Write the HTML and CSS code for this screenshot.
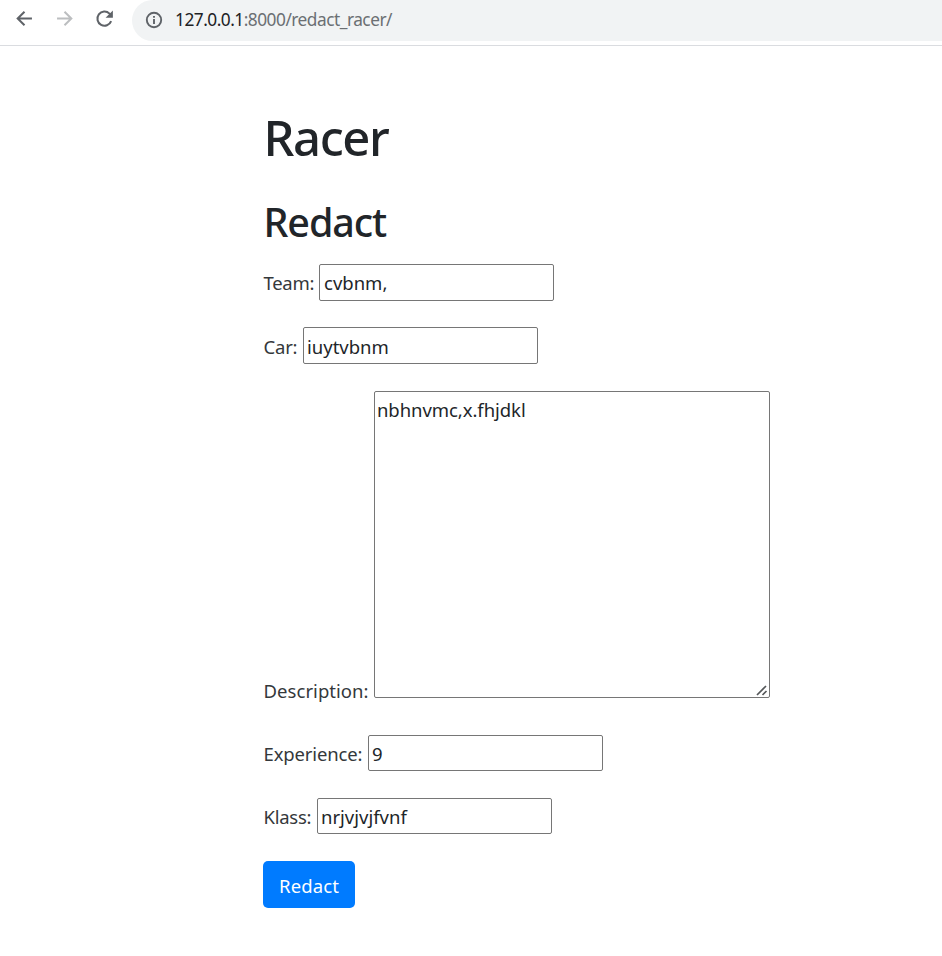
FILE: index.html
```
<!DOCTYPE html>
<html lang="en">
<head>
<meta charset="utf-8">
<title>Racer</title>
<link rel="stylesheet" href="styles.css">
</head>
<body>
<header class="toolbar">
  <svg class="nav" viewBox="0 0 24 24"><path d="M20.5 12H4.5M12 4.2 4.2 12l7.8 7.8"/></svg>
  <svg class="nav disabled" viewBox="0 0 24 24"><path d="M3.5 12h16M12 4.2l7.8 7.8-7.8 7.8"/></svg>
  <svg class="nav" viewBox="0 0 24 24"><path d="M19.6 15A8.1 8.1 0 1 1 17.7 6.4L20 8.7"/><path class="solid" d="M21.6 2.8v8.4h-8.4z"/></svg>
  <div class="address">
    <svg class="info" viewBox="0 0 18 18"><circle cx="9" cy="9" r="7.2"/><path d="M9 8v5M9 4.9v1.9"/></svg>
    <span class="url"><span class="host">127.0.0.1</span>:8000/redact_racer/</span>
  </div>
</header>
<main class="page">
  <h1>Racer</h1>
  <h2>Redact</h2>
  <form>
    <div class="row team"><label for="team">Team:</label><input id="team" type="text" value="cvbnm,"></div>
    <div class="row car"><label for="car">Car:</label><input id="car" type="text" value="iuytvbnm"></div>
    <div class="row description">
      <label for="description">Description:</label>
      <div class="area">
        <textarea id="description" spellcheck="false">nbhnvmc,x.fhjdkl</textarea>
        <svg class="grip" viewBox="0 0 12 11"><path d="M1 10 10 1M6.5 10 10.5 6"/></svg>
      </div>
    </div>
    <div class="row experience"><label for="experience">Experience:</label><input id="experience" type="text" value="9"></div>
    <div class="row klass"><label for="klass">Klass:</label><input id="klass" type="text" value="nrjvjvjfvnf"></div>
    <button type="button">Redact</button>
  </form>
</main>
</body>
</html>
```
FILE: styles.css
```
* { box-sizing: border-box; }
body {
  margin: 0;
  background: #fff;
  color: #212529;
  font-family: "Noto Sans", sans-serif;
  font-size: 18.5px;
}
.toolbar {
  display: flex;
  height: 46px;
  padding-left: 14px;
  border-bottom: 1px solid #dadce0;
}
.nav {
  width: 21px;
  height: 21px;
  margin: 8px 19px 0 0;
  fill: none;
  stroke: #5f6368;
  stroke-width: 2.3;
}
.nav.disabled { stroke: #bcbec0; }
.nav .solid { fill: #5f6368; stroke: none; }
.address {
  display: flex;
  align-items: center;
  flex: 1;
  height: 41px;
  margin-left: -2px;
  padding: 0 0 2px 13px;
  border-radius: 21px 0 0 21px;
  background: #f1f3f4;
}
.info {
  width: 18px;
  height: 18px;
  margin-right: 12px;
  fill: none;
  stroke: #5f6368;
  stroke-width: 1.9;
}
.url { font-size: 17.3px; letter-spacing: -0.5px; color: #6b6f73; }
.host { color: #202124; }
.page { padding: 57px 0 0 263px; }
h1, h2 { margin: 0; padding-left: 0.5px; font-weight: 500; white-space: nowrap; }
h1 { height: 87px; font-size: 49px; line-height: 68px; letter-spacing: -1.4px; }
h2 { height: 74px; font-size: 39.5px; line-height: 64px; letter-spacing: -1.1px; }
.row { display: flex; height: 37px; margin-bottom: 26px; }
label { line-height: 37px; white-space: nowrap; letter-spacing: -0.1px; color: #34383b; padding-left: 0.5px; }
input, textarea {
  margin: 0;
  padding: 1px 3px;
  border: 1px solid #767676;
  border-radius: 2px;
  background: #fff;
  color: #212529;
  font: inherit;
  outline: none;
}
input { width: 235px; height: 37px; }
.team label { width: 56px; letter-spacing: -0.3px; }
.team input { padding-left: 4px; }
.car label { width: 40px; line-height: 39px; letter-spacing: -0.2px; }
.car input { padding-top: 3px; }
.car { margin-bottom: 27px; }
.description { height: 307px; margin-bottom: 37px; align-items: flex-end; }
.description label { width: 111px; line-height: 14px; letter-spacing: 0.05px; }
.area { position: relative; width: 396px; height: 307px; }
textarea {
  display: block;
  width: 100%;
  height: 100%;
  padding: 3px 2px;
  line-height: 30px;
  letter-spacing: -0.06px;
  resize: none;
}
.grip {
  position: absolute;
  right: 2px;
  bottom: 2px;
  width: 12px;
  height: 11px;
  fill: none;
  stroke: #55585a;
  stroke-width: 1.7;
}
.experience label { width: 105px; letter-spacing: -0.15px; }
.experience, .klass, .experience input, .klass input { height: 36px; }
.experience, .klass { margin-bottom: 27px; }
.klass label { width: 54px; letter-spacing: -0.25px; }
button {
  display: block;
  width: 92px;
  height: 47px;
  padding: 2px 0 0;
  border: 0;
  border-radius: 5px;
  background: #007bff;
  color: #fff;
  font: inherit;
  letter-spacing: 0.1px;
}
```
